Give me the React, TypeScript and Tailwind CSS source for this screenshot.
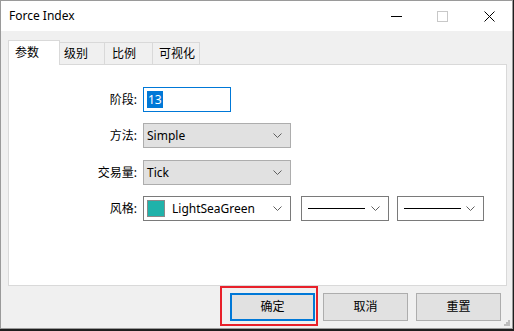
const font = { fontFamily: '"Noto Sans", "Noto Sans CJK SC", sans-serif' };

function Chevron() {
  return (
    <svg width="9" height="5" viewBox="0 0 9 5" className="shrink-0">
      <path d="M0.5 0.5 L4.5 4.5 L8.5 0.5" fill="none" stroke="#5f5f5f" strokeWidth="1" />
    </svg>
  );
}

function Select({ value }: { value: string }) {
  return (
    <div className="flex h-[25px] w-[148px] items-center justify-between border border-[#adadad] bg-[#e1e1e1] pl-[3px] pr-[8px]">
      <span className="text-[12px] leading-none text-black">{value}</span>
      <Chevron />
    </div>
  );
}

function LineSelect({ w }: { w: string }) {
  return (
    <div className={`flex h-[25px] ${w} items-center border border-[#7a7a7a] bg-white pl-[6px] pr-[8px]`}>
      <div className="h-px w-[57px] bg-black" />
      <div className="flex-1" />
      <Chevron />
    </div>
  );
}

const tabs = ['级别', '比例', '可视化'];
const tabW = ['w-[45px] pl-[4px]', 'w-[48px] pl-[7px]', 'w-[47px] pl-[6px]'];

export default function App() {
  return (
    <div className="h-[331px] w-[514px] overflow-hidden bg-[#1e1e1e]" style={font}>
      <div className="relative flex h-[329px] w-[513px] flex-col border border-[#9a9a9a] bg-[#f0f0f0]">
        {/* title bar */}
        <div className="flex h-[30px] items-center bg-white pl-[8px]">
          <span className="text-[12px] text-black">Force Index</span>
          <div className="flex-1" />
          <svg width="11" height="1" className="mr-[35px]"><rect width="11" height="1" fill="#000" /></svg>
          <svg width="11" height="11" className="mr-[36px]"><rect x="0.5" y="0.5" width="10" height="10" fill="none" stroke="#c8c8c8" /></svg>
          <svg width="11" height="11" className="mr-[17px]">
            <path d="M0.5 0.5 L10.5 10.5 M10.5 0.5 L0.5 10.5" stroke="#000" strokeWidth="1" />
          </svg>
        </div>

        {/* body */}
        <div className="px-[7px] pt-[9px]">
          <div className="flex h-[24px] items-end">
            <div className="relative z-10 -mb-px flex h-[25px] w-[52px] items-center border border-b-0 border-[#d9d9d9] bg-white pl-[6px] text-[12px] text-black">
              参数
            </div>
            {tabs.map((t, i) => (
              <div
                key={t}
                className={`flex h-[22px] ${tabW[i]} items-center border border-b-0 border-l-0 border-[#d9d9d9] bg-[#f0f0f0] text-[12px] text-black`}
              >
                {t}
              </div>
            ))}
          </div>

          <div className="h-[222px] w-[499px] border border-[#d9d9d9] bg-white pt-[22px]">
            <div className="flex items-center">
              <span className="w-[128px] text-right text-[12px] text-black">阶段:</span>
              <div className="ml-[6px] flex h-[25px] w-[88px] items-center border border-[#0078d7] bg-white pl-[3px]">
                <span className="bg-[#0078d7] px-px text-[12px] leading-[17px] text-white">13</span>
              </div>
            </div>
            <div className="mt-[11px] flex items-center">
              <span className="w-[128px] text-right text-[12px] text-black">方法:</span>
              <div className="ml-[6px]"><Select value="Simple" /></div>
            </div>
            <div className="mt-[12px] flex items-center">
              <span className="w-[128px] text-right text-[12px] text-black">交易量:</span>
              <div className="ml-[6px]"><Select value="Tick" /></div>
            </div>
            <div className="mt-[11px] flex items-center">
              <span className="w-[128px] text-right text-[12px] text-black">风格:</span>
              <div className="ml-[6px] flex h-[25px] w-[148px] items-center border border-[#7a7a7a] bg-white pl-[3px] pr-[8px]">
                <div className="h-[17px] w-[18px] border border-[#8a8a8a] bg-[#20b2aa]" />
                <span className="ml-[7px] text-[12px] leading-none text-black">LightSeaGreen</span>
                <div className="flex-1" />
                <Chevron />
              </div>
              <div className="ml-[10px]"><LineSelect w="w-[88px]" /></div>
              <div className="ml-[8px]"><LineSelect w="w-[87px]" /></div>
            </div>
          </div>
        </div>

        {/* buttons */}
        <div className="mt-[7px] flex justify-end gap-[8px] pr-[11px]">
          <div className="relative">
            <div className="flex h-[28px] w-[85px] items-center justify-center border-2 border-[#0078d7] bg-[#e1e1e1] text-[12px] text-black">
              确定
            </div>
            <div className="pointer-events-none absolute -left-[10px] -top-[7px] h-[40px] w-[98px] border-2 border-[#e8202a]" />
          </div>
          <div className="flex h-[28px] w-[85px] items-center justify-center border border-[#adadad] bg-[#e1e1e1] text-[12px] text-black">
            取消
          </div>
          <div className="flex h-[28px] w-[85px] items-center justify-center border border-[#adadad] bg-[#e1e1e1] text-[12px] text-black">
            重置
          </div>
        </div>

        {/* resize grip */}
        <svg width="7" height="7" className="absolute bottom-[2px] right-[2px]">
          <rect x="5" y="1" width="2" height="2" fill="#bdbdbd" />
          <rect x="3" y="3" width="2" height="2" fill="#bdbdbd" />
          <rect x="5" y="3" width="2" height="2" fill="#bdbdbd" />
          <rect x="1" y="5" width="2" height="2" fill="#bdbdbd" />
          <rect x="3" y="5" width="2" height="2" fill="#bdbdbd" />
          <rect x="5" y="5" width="2" height="2" fill="#bdbdbd" />
        </svg>
      </div>
    </div>
  );
}
